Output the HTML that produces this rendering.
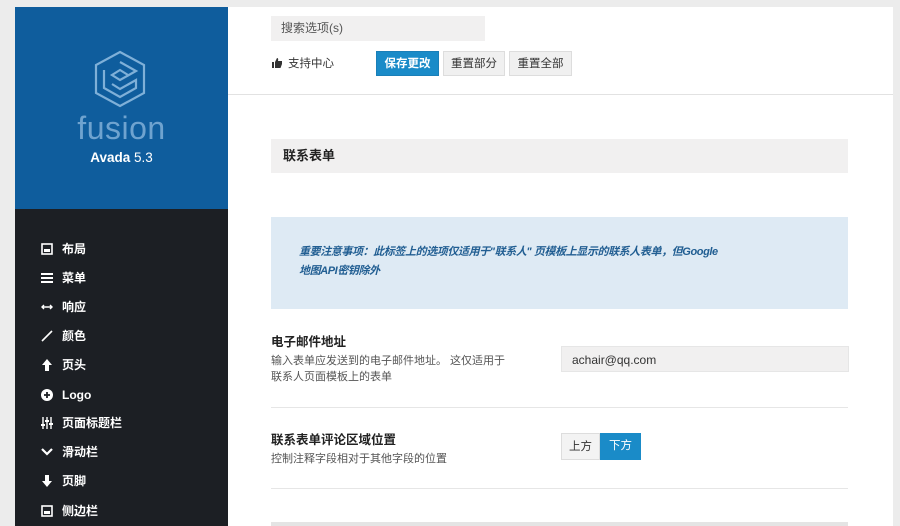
<!DOCTYPE html>
<html><head><meta charset="utf-8"><style>
*{margin:0;padding:0;box-sizing:border-box}
body{width:900px;height:526px;overflow:hidden;background:#ececec;font-family:"Liberation Sans","Noto Sans CJK SC",sans-serif;position:relative}
.side{position:absolute;left:15px;top:7px;width:213px;height:519px;background:#1c1f24}
.brand{position:absolute;left:0;top:0;width:213px;height:202px;background:#0f5d9d}
.main{position:absolute;left:228px;top:7px;width:665px;height:519px;background:#fff}
.abs{position:absolute}
.menu div{position:absolute;left:26px;color:#fff;font-size:12px;font-weight:bold;height:16px;line-height:16px}
.menu span{position:absolute;left:21px;top:0;white-space:nowrap}
.menu svg{position:absolute;left:0;top:2px}
.btn{position:absolute;top:44px;height:25px;line-height:25px;font-size:11.5px;text-align:center;border:1px solid #ddd;background:#f0f0f0;color:#333}
.gray{background:#f1f0f0}
.t{font-size:12.5px;color:#222;font-weight:bold}
.d{font-size:11px;color:#555;line-height:16px}
</style></head><body>
<div class="side">
 <div class="brand">
  <svg class="abs" style="left:77px;top:43px" width="56" height="58" viewBox="0 0 56 58" fill="none" stroke="#7fb0d8" stroke-width="2.2">
   <path d="M28 2 L52 15 L52 43 L28 56 L4 43 L4 15 Z"/>
   <path d="M28 12 L44 21 L28 30 L20 25 L28 20 L36 25"/>
   <path d="M12 20 L12 38 L28 47 L44 38 L44 30 L28 39 L20 34"/>
  </svg>
  <div class="abs" style="left:0;width:213px;top:103px;text-align:center;color:#6fa3cf;font-size:32px;letter-spacing:0.5px;font-weight:300">fusion</div>
  <div class="abs" style="left:0;width:213px;top:143px;text-align:center;color:#fff;font-size:13.5px"><b>Avada</b> 5.3</div>
 </div>
 <div class="menu">
  <div style="top:234px"><svg width="12" height="12"><rect x="1" y="1" width="10" height="10" fill="none" stroke="#fff" stroke-width="1.6"/><rect x="3" y="6" width="6" height="3" fill="#fff"/></svg><span>布局</span></div>
  <div style="top:263px"><svg width="12" height="12"><rect x="0" y="1" width="12" height="2" fill="#fff"/><rect x="0" y="5" width="12" height="2" fill="#fff"/><rect x="0" y="9" width="12" height="2" fill="#fff"/></svg><span>菜单</span></div>
  <div style="top:292px"><svg width="12" height="12"><path d="M1 6H11M3 4L1 6L3 8M9 4L11 6L9 8" stroke="#fff" stroke-width="1.4" fill="none"/></svg><span>响应</span></div>
  <div style="top:321px"><svg width="12" height="12"><path d="M1 11L11 1" stroke="#fff" stroke-width="1.6"/></svg><span>颜色</span></div>
  <div style="top:350px"><svg width="12" height="12"><path d="M6 0L11 6H8V12H4V6H1Z" fill="#fff"/></svg><span>页头</span></div>
  <div style="top:380px"><svg width="12" height="12"><circle cx="6" cy="6" r="6" fill="#fff"/><path d="M3 6H9M6 3V9" stroke="#1c1f24" stroke-width="1.8"/></svg><span>Logo</span></div>
  <div style="top:408px"><svg width="12" height="12"><path d="M2 0V12M6 0V12M10 0V12" stroke="#fff" stroke-width="1.4"/><path d="M0 8H4M4 4H8M8 7H12" stroke="#fff" stroke-width="2"/></svg><span>页面标题栏</span></div>
  <div style="top:437px"><svg width="12" height="12"><path d="M1 3L6 8L11 3" stroke="#fff" stroke-width="2.2" fill="none"/></svg><span>滑动栏</span></div>
  <div style="top:466px"><svg width="12" height="12"><path d="M6 12L11 6H8V0H4V6H1Z" fill="#fff"/></svg><span>页脚</span></div>
  <div style="top:496px"><svg width="12" height="12"><rect x="1" y="1" width="10" height="10" fill="none" stroke="#fff" stroke-width="1.6"/><rect x="3" y="6" width="6" height="3" fill="#fff"/></svg><span>侧边栏</span></div>
 </div>
</div>
<div class="main">
 <div class="abs gray" style="left:43px;top:9px;width:214px;height:25px;font-size:12px;color:#555;line-height:25px;padding-left:10px">搜索选项(s)</div>
 <svg class="abs" style="left:44px;top:51px" width="10" height="10" viewBox="0 0 10 10"><rect x="0" y="4" width="2" height="6" fill="#333"/><path d="M3 4L5 0C6 0 6.5 1 6 3H10V6L8.5 10H3Z" fill="#333"/></svg>
 <div class="abs" style="left:60px;top:48px;font-size:11.5px;color:#333">支持中心</div>
 <div class="btn" style="left:148px;width:63px;background:#1a8bc8;border-color:#1a7fb8;color:#fff;font-weight:bold">保存更改</div>
 <div class="btn" style="left:215px;width:62px">重置部分</div>
 <div class="btn" style="left:281px;width:63px">重置全部</div>
 <div class="abs" style="left:0;top:87px;width:665px;height:1px;background:#e2e2e2"></div>
 <div class="abs gray" style="left:43px;top:132px;width:577px;height:34px;line-height:34px;padding-left:12px;font-size:13px;font-weight:bold;color:#222">联系表单</div>
 <div class="abs" style="left:43px;top:210px;width:577px;height:92px;background:#deeaf4"></div>
 <div class="abs" style="left:71px;top:236px;white-space:nowrap;font-size:11px;letter-spacing:-0.4px;line-height:19px;font-style:italic;font-weight:bold;color:#215e92">重要注意事项：此标签上的选项仅适用于"联系人" 页模板上显示的联系人表单，但Google<br>地图API密钥除外</div>
 <div class="abs t" style="left:43px;top:324px">电子邮件地址</div>
 <div class="abs d" style="left:43px;top:346px">输入表单应发送到的电子邮件地址。 这仅适用于<br>联系人页面模板上的表单</div>
 <div class="abs gray" style="left:333px;top:339px;width:288px;height:26px;line-height:26px;padding-left:10px;font-size:12px;color:#333;border:1px solid #e6e6e6">achair@qq.com</div>
 <div class="abs" style="left:43px;top:400px;width:577px;height:1px;background:#e6e6e6"></div>
 <div class="abs t" style="left:43px;top:422px">联系表单评论区域位置</div>
 <div class="abs d" style="left:43px;top:444px">控制注释字段相对于其他字段的位置</div>
 <div class="abs" style="left:333px;top:426px;width:39px;height:27px;line-height:27px;text-align:center;font-size:11.5px;color:#333;background:#f3f3f3;border:1px solid #ddd">上方</div>
 <div class="abs" style="left:372px;top:426px;width:41px;height:27px;line-height:27px;text-align:center;font-size:11.5px;color:#fff;background:#1a8bc8">下方</div>
 <div class="abs" style="left:43px;top:481px;width:577px;height:1px;background:#e6e6e6"></div>
 <div class="abs" style="left:43px;top:515px;width:577px;height:4px;background:#e4e4e4"></div>
</div>
</body></html>
